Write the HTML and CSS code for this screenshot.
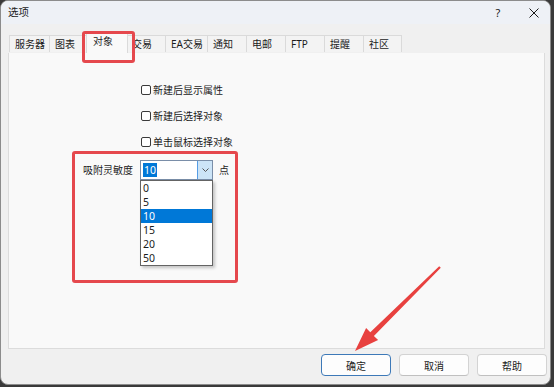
FILE: index.html
```html
<!DOCTYPE html>
<html lang="zh">
<head>
<meta charset="utf-8">
<title>选项</title>
<link rel="stylesheet" href="styles.css">
</head>
<body>
<div class="window">
  <div class="titlebar">
    <span class="title">选项</span>
    <div class="caption">
      <span class="cap-btn help">?</span>
      <span class="cap-btn close">
        <svg width="10" height="10" viewBox="0 0 10 10"><path d="M0.5 0.5 L9.5 9.5 M9.5 0.5 L0.5 9.5" stroke="#1a1a1a" stroke-width="1" fill="none"/></svg>
      </span>
    </div>
  </div>
  <div class="tabs">
    <div class="tab">服务器</div>
    <div class="tab">图表</div>
    <div class="tab active">对象</div>
    <div class="tab">交易</div>
    <div class="tab">EA交易</div>
    <div class="tab">通知</div>
    <div class="tab">电邮</div>
    <div class="tab">FTP</div>
    <div class="tab">提醒</div>
    <div class="tab">社区</div>
  </div>
  <div class="panel">
    <label class="check"><span class="box"></span><span>新建后显示属性</span></label>
    <label class="check"><span class="box"></span><span>新建后选择对象</span></label>
    <label class="check"><span class="box"></span><span>单击鼠标选择对象</span></label>
    <div class="snap">
      <span class="snap-label">吸附灵敏度</span>
      <div class="combo">
        <div class="combo-field"><span class="sel">10</span></div>
        <div class="combo-btn">
          <svg width="7" height="4" viewBox="0 0 7 4"><path d="M0.5 0.5 L3.5 3.5 L6.5 0.5" stroke="#555" stroke-width="1" fill="none"/></svg>
        </div>
        <ul class="combo-list">
          <li>0</li>
          <li>5</li>
          <li class="on">10</li>
          <li>15</li>
          <li>20</li>
          <li>50</li>
        </ul>
      </div>
      <span class="unit">点</span>
    </div>
  </div>
  <div class="footer">
    <button class="btn default">确定</button>
    <button class="btn">取消</button>
    <button class="btn">帮助</button>
  </div>
</div>
<div class="annot">
  <div class="mark mark-tab"></div>
  <div class="mark mark-snap"></div>
  <svg class="arrow" width="554" height="387" viewBox="0 0 554 387">
    <polygon points="440.8,267.8 373.9,335.9 378.1,340.1 355,351 366.1,328.1 370.3,332.3 439.2,266.2" fill="#e8413f"/>
  </svg>
</div>
</body>
</html>
```

FILE: styles.css
```css
html, body {
  margin: 0;
  padding: 0;
}

body {
  width: 554px;
  height: 387px;
  background: #3a3a3a;
  position: relative;
  overflow: hidden;
  font-family: "Noto Sans", "Noto Sans CJK SC", sans-serif;
  font-size: 10px;
  color: #1b1b1b;
}

.window {
  width: 549px;
  height: 383px;
  border: 1px solid #8c8c8c;
  border-radius: 8px;
  background: #f0f0f0;
  display: flex;
  flex-direction: column;
  overflow: hidden;
}

.titlebar {
  height: 23px;
  display: flex;
  align-items: center;
  padding-left: 7px;
  background: #eef1f6;
  flex: none;
}

.title {
  font-size: 10.5px;
  line-height: 1;
}

.caption {
  margin-left: auto;
  display: flex;
  height: 100%;
}

.cap-btn {
  display: flex;
  align-items: center;
  justify-content: center;
  height: 100%;
}

.help {
  width: 40px;
  font-size: 11px;
  color: #222;
}

.close {
  width: 32px;
}

.tabs {
  display: flex;
  align-items: flex-end;
  height: 29px;
  padding-left: 8px;
  margin-bottom: -1px;
  position: relative;
  z-index: 1;
  flex: none;
  background: #f0f0f0;
}

.tab {
  box-sizing: border-box;
  height: 17px;
  min-width: 39px;
  padding: 0 4px 0 5px;
  margin-bottom: 1px;
  border: 1px solid #dadada;
  border-bottom: none;
  border-right: none;
  background: #f3f3f3;
  display: flex;
  align-items: center;
  line-height: 1;
  white-space: nowrap;
}

.tab:last-child {
  border-right: 1px solid #dadada;
}

.tab.active {
  height: 22px;
  margin: 0 -2px 0 -2px;
  padding: 0 14px 4px 6px;
  border-right: 1px solid #dadada;
  background: #f9f9f9;
  position: relative;
  z-index: 2;
}

.panel {
  flex: 1;
  margin: 0 5px 0 7px;
  border: 1px solid #dcdcdc;
  background: #f9f9f9;
  padding-top: 24px;
  display: flex;
  flex-direction: column;
}

.check {
  display: flex;
  align-items: center;
  height: 26px;
  margin-left: 132px;
  gap: 2px;
  line-height: 1;
}

.box {
  box-sizing: border-box;
  width: 10px;
  height: 10px;
  border: 1px solid #3a3a3a;
  border-radius: 2px;
  background: #ffffff;
}

.snap {
  display: flex;
  align-items: center;
  height: 20px;
  margin-top: 5px;
  margin-left: 74px;
  line-height: 1;
}

.snap-label {
  width: 57px;
}

.combo {
  position: relative;
  box-sizing: border-box;
  width: 73px;
  height: 20px;
  border: 1px solid #7a8ea8;
  background: #fff;
  display: flex;
}

.combo-field {
  flex: 1;
  display: flex;
  align-items: center;
  padding-left: 2px;
}

.sel {
  background: #0078d7;
  color: #fff;
  font-size: 10.5px;
  padding: 2px 1px;
}

.combo-btn {
  width: 14px;
  background: #cce4f7;
  border-left: 1px solid #569de5;
  display: flex;
  align-items: center;
  justify-content: center;
}

.combo-list {
  position: absolute;
  left: -1px;
  top: 19px;
  width: 73px;
  box-sizing: border-box;
  margin: 0;
  padding: 0;
  list-style: none;
  background: #fff;
  border: 1px solid #646464;
  box-shadow: 2px 2px 3px rgba(0, 0, 0, 0.22);
  z-index: 3;
}

.combo-list li {
  height: 14px;
  line-height: 14px;
  padding-left: 2px;
  font-size: 10.5px;
}

.combo-list li.on {
  background: #0078d7;
  color: #fff;
}

.unit {
  margin-left: 6px;
}

.footer {
  box-sizing: border-box;
  height: 35px;
  flex: none;
  display: flex;
  justify-content: flex-end;
  align-items: flex-start;
  gap: 8px;
  padding: 5px 3px 0 0;
}

.btn {
  box-sizing: border-box;
  width: 70px;
  height: 22px;
  border: 1px solid #d3d3d3;
  border-bottom-color: #c0c0c0;
  border-radius: 4px;
  background: #fdfdfd;
  font-family: inherit;
  font-size: 10px;
  color: #1b1b1b;
  padding: 0;
}

.btn.default {
  border-color: #3d79b8;
}

.annot {
  position: absolute;
  left: 0;
  top: 0;
  width: 554px;
  height: 387px;
  pointer-events: none;
  z-index: 10;
}

.mark {
  position: absolute;
  box-sizing: border-box;
  border: 3px solid #e5484d;
  border-radius: 3px;
}

.mark-tab {
  left: 82px;
  top: 31px;
  width: 53px;
  height: 32px;
}

.mark-snap {
  left: 72px;
  top: 151px;
  width: 166px;
  height: 132px;
}

.arrow {
  position: absolute;
  left: 0;
  top: 0;
}
```
